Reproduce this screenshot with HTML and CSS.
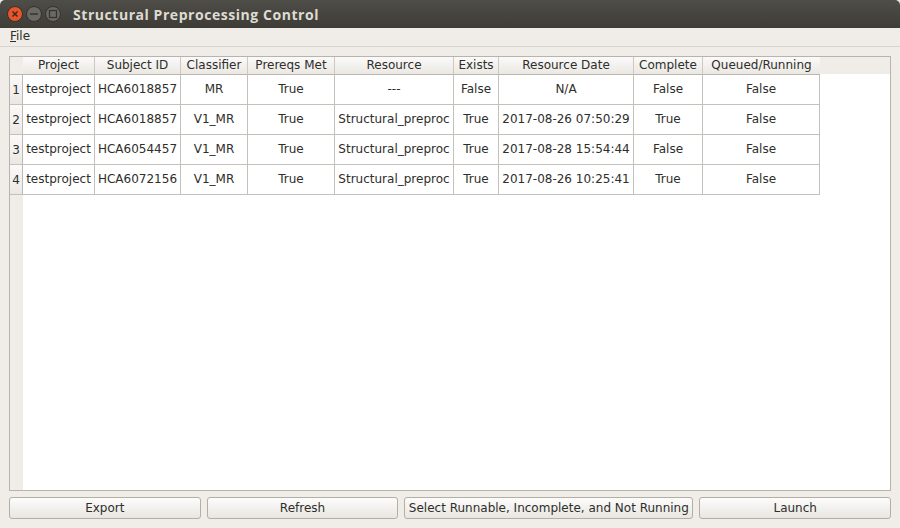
FILE: index.html
```html
<!DOCTYPE html>
<html lang="en">
<head>
<meta charset="utf-8">
<title>Structural Preprocessing Control</title>
<link rel="stylesheet" href="styles.css">
</head>
<body>
<div class="window">
  <header class="titlebar">
    <div class="controls">
      <svg class="ctl" width="18" height="18" viewBox="0 0 18 18"><circle cx="9" cy="9" r="7.5" fill="#e9552a" stroke="#33322e"/><path d="M6.5 6.5l5 5M11.5 6.5l-5 5" stroke="#3c2a20" stroke-width="1.5"/></svg>
      <svg class="ctl" width="18" height="18" viewBox="0 0 18 18"><circle cx="9" cy="9" r="7.5" fill="#6a6963" stroke="#33322e"/><path d="M5 9h8" stroke="#35342f" stroke-width="1.5"/></svg>
      <svg class="ctl" width="18" height="18" viewBox="0 0 18 18"><circle cx="9" cy="9" r="7.5" fill="#6a6963" stroke="#33322e"/><rect x="5.5" y="5.5" width="7" height="7" fill="none" stroke="#35342f" stroke-width="1.3"/></svg>
    </div>
    <span class="title">Structural Preprocessing Control</span>
  </header>
  <nav class="menubar"><span class="menu"><u>F</u>ile</span></nav>
  <main class="content">
    <section class="frame">
      <div class="grid">
        <div class="hd corner"></div>
        <div class="hd">Project</div>
        <div class="hd">Subject ID</div>
        <div class="hd">Classifier</div>
        <div class="hd">Prereqs Met</div>
        <div class="hd">Resource</div>
        <div class="hd">Exists</div>
        <div class="hd">Resource Date</div>
        <div class="hd">Complete</div>
        <div class="hd last">Queued/Running</div>

        <div class="rh">1</div>
        <div class="c">testproject</div><div class="c">HCA6018857</div><div class="c">MR</div><div class="c">True</div><div class="c">---</div><div class="c">False</div><div class="c">N/A</div><div class="c">False</div><div class="c">False</div>

        <div class="rh">2</div>
        <div class="c">testproject</div><div class="c">HCA6018857</div><div class="c">V1_MR</div><div class="c">True</div><div class="c">Structural_preproc</div><div class="c">True</div><div class="c">2017-08-26 07:50:29</div><div class="c">True</div><div class="c">False</div>

        <div class="rh">3</div>
        <div class="c">testproject</div><div class="c">HCA6054457</div><div class="c">V1_MR</div><div class="c">True</div><div class="c">Structural_preproc</div><div class="c">True</div><div class="c">2017-08-28 15:54:44</div><div class="c">False</div><div class="c">False</div>

        <div class="rh">4</div>
        <div class="c">testproject</div><div class="c">HCA6072156</div><div class="c">V1_MR</div><div class="c">True</div><div class="c">Structural_preproc</div><div class="c">True</div><div class="c">2017-08-26 10:25:41</div><div class="c">True</div><div class="c">False</div>
      </div>
    </section>
    <footer class="buttons">
      <button class="btn">Export</button>
      <button class="btn">Refresh</button>
      <button class="btn wide">Select Runnable, Incomplete, and Not Running</button>
      <button class="btn">Launch</button>
    </footer>
  </main>
</div>
</body>
</html>
```
FILE: styles.css
```css
* { box-sizing: border-box; }
html, body { margin: 0; padding: 0; height: 100%; }
body {
  font-family: "DejaVu Sans", sans-serif;
  font-size: 12px;
  color: #2e2e2b;
  background: #f0ede8;
  overflow: hidden;
}
.window { width: 900px; height: 528px; display: flex; flex-direction: column; }
.titlebar {
  height: 28px;
  flex: none;
  display: flex;
  align-items: center;
  background: linear-gradient(#4f4d47, #3d3c37);
  border-radius: 5px 5px 0 0;
  box-shadow: 0 0 0 0 #000;
  padding-left: 6px;
}
.controls { display: flex; gap: 1px; width: 67px; margin-top: -1px; }
.ctl { display: block; }
.title {
  font-family: "Open Sans", "DejaVu Sans", sans-serif;
  font-weight: 700;
  font-size: 14px;
  letter-spacing: 0.55px;
  color: #dfdbd2;
}
.menubar {
  height: 19px;
  flex: none;
  border-bottom: 1px solid #d9d5ce;
  background: #f0ede8;
  padding-left: 10px;
  line-height: 17px;
}
.menu { color: #2e2e2b; }
.content {
  flex: 1;
  display: flex;
  flex-direction: column;
  padding: 9px 9px 9px 9px;
  gap: 6px;
}
.frame {
  flex: 1;
  background: #fff;
  border: 1px solid #b8b4ac;
  position: relative;
  background-image: linear-gradient(#f0ede8, #f0ede8), linear-gradient(#f0ede8, #f0ede8);
  background-repeat: no-repeat, no-repeat;
  background-size: 100% 17px, 13px 100%;
}
.grid {
  display: grid;
  grid-template-columns: 13px 72px 86px 67px 87px 119px 45px 135px 69px 117px;
  grid-template-rows: 18px repeat(4, 30px);
  width: max-content;
}
.hd {
  display: flex;
  align-items: center;
  justify-content: center;
  background: linear-gradient(#fbfafa, #ebe8e3);
  border-right: 1px solid #cdc9c2;
  border-bottom: 1px solid #b9b6ae;
  padding-bottom: 1px;
  white-space: nowrap;
}
.hd.corner { background: #f0ede8; border-right: none; }
.hd.last { border-right: none; }
.rh {
  display: flex;
  align-items: center;
  justify-content: center;
  background: linear-gradient(#fbfafa, #ebe8e3);
  border-right: 1px solid #bdbab3;
  border-bottom: 1px solid #c4c1ba;
}
.c {
  display: flex;
  align-items: center;
  justify-content: center;
  background: #fff;
  border-right: 1px solid #c4c1ba;
  border-bottom: 1px solid #c4c1ba;
  padding-bottom: 2px;
  white-space: nowrap;
  overflow: hidden;
}
.buttons { display: flex; gap: 6px; height: 22px; flex: none; margin-bottom: 0; }
.btn {
  flex: 1 1 0;
  font: inherit;
  color: #2e2e2b;
  height: 22px;
  padding: 0 0 1px;
  background: linear-gradient(#fcfcfb, #e9e6e1);
  border: 1px solid #b3afa7;
  border-radius: 3px;
  white-space: nowrap;
}
.btn.wide { flex: none; width: 289px; }
```
